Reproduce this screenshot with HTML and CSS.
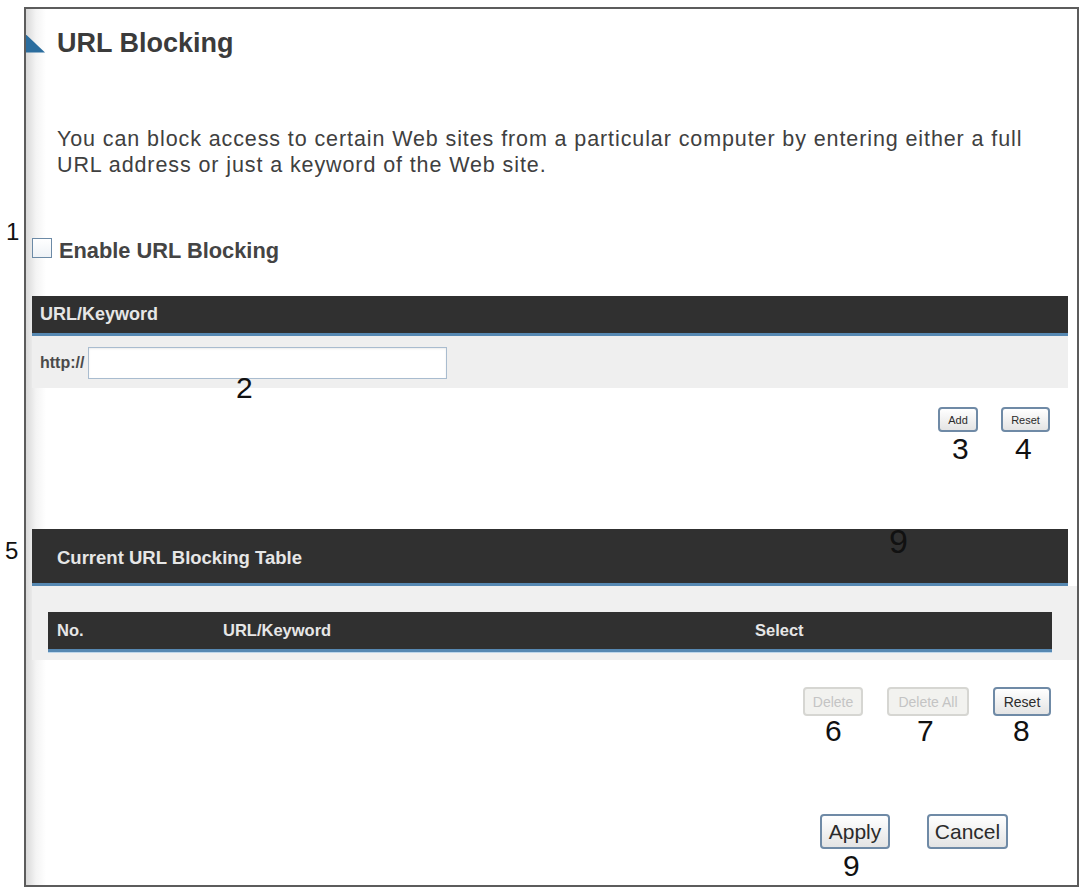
FILE: index.html
```html
<!DOCTYPE html>
<html lang="en">
<head>
    <meta charset="UTF-8">
    <title>URL Blocking</title>
    <link rel="stylesheet" href="styles.css">
</head>
<body>
    <div class="page">
        <div class="frame">
            <h1 class="title">URL Blocking</h1>
            <p class="intro">You can block access to certain Web sites from a particular computer by entering either a full<br>URL address or just a keyword of the Web site.</p>

            <label class="enable-row">
                <span class="checkbox"></span>
                <span class="enable-text">Enable URL Blocking</span>
            </label>

            <div class="bar bar-small">URL/Keyword</div>
            <div class="input-row">
                <span class="prefix">http://</span>
                <span class="url-input"></span>
            </div>
            <div class="btn-row btn-row-add">
                <button class="btn btn-xs btn-add">Add</button>
                <button class="btn btn-xs btn-reset1">Reset</button>
            </div>

            <div class="bar bar-large">Current URL Blocking Table</div>
            <div class="table-panel">
                <div class="table-head">
                    <span>No.</span>
                    <span>URL/Keyword</span>
                    <span>Select</span>
                </div>
            </div>
            <div class="btn-row btn-row-delete">
                <button class="btn btn-md disabled btn-delete">Delete</button>
                <button class="btn btn-md disabled btn-delete-all">Delete All</button>
                <button class="btn btn-md btn-reset2">Reset</button>
            </div>

            <div class="btn-row btn-row-apply">
                <button class="btn btn-lg btn-apply">Apply</button>
                <button class="btn btn-lg btn-cancel">Cancel</button>
            </div>
        </div>

        <!-- callout numbers -->
        <span class="note note-sm" style="left:6px; top:220px;">1</span>
        <span class="note" style="left:236px; top:373px;">2</span>
        <span class="note" style="left:952px; top:434px;">3</span>
        <span class="note" style="left:1015px; top:434px;">4</span>
        <span class="note note-sm" style="left:5px; top:539px;">5</span>
        <span class="note note-lg" style="left:889px; top:524px;">9</span>
        <span class="note" style="left:825px; top:716px;">6</span>
        <span class="note" style="left:917px; top:716px;">7</span>
        <span class="note" style="left:1013px; top:716px;">8</span>
        <span class="note" style="left:843px; top:851px;">9</span>
    </div>
</body>
</html>
```

FILE: styles.css
```css
body {
    margin: 0;
    background-color: #fff;
    font-family: "Liberation Sans", Arial, sans-serif;
}
.page {
    position: relative;
    padding: 7px 0 0 24px;
}
.frame {
    box-sizing: border-box;
    width: 1055px;
    height: 880px;
    border: 2px solid #5c5c5c;
    background: linear-gradient(to right, #d9d9d9 0, #f4f4f4 10px, #fff 20px);
    overflow: hidden;
}
.title {
    display: flex;
    align-items: center;
    gap: 12px;
    margin: 21px 0 0 0;
    font-size: 27px;
    line-height: 27px;
    font-weight: bold;
    color: #3b3b3b;
}
.title::before {
    content: "";
    width: 19px;
    height: 18px;
    background-color: #2b6d9e;
    clip-path: polygon(0 0, 0 100%, 100% 100%);
}
.intro {
    margin: 69px 0 0 31px;
    font-size: 21.5px;
    letter-spacing: 0.9px;
    line-height: 26px;
    color: #404040;
}
.enable-row {
    display: flex;
    align-items: flex-start;
    gap: 7px;
    margin: 60px 0 0 6px;
    height: 24px;
}
.checkbox {
    width: 18px;
    height: 18px;
    border: 1px solid #6c8aa6;
    background: linear-gradient(#fff, #eef2f6);
}
.enable-text {
    margin-top: 1px;
    font-size: 21.8px;
    line-height: 24px;
    font-weight: bold;
    color: #444;
}
.bar {
    display: flex;
    align-items: center;
    margin: 0 9px 0 6px;
    background-color: #303030;
    color: #e6e6e6;
    font-weight: bold;
    border-bottom: 3px solid #5688b2;
    box-shadow: 0 1px 0 #bcd5ea;
}
.bar-small {
    margin-top: 34px;
    height: 37px;
    padding-left: 8px;
    font-size: 18px;
}
.bar-large {
    margin-top: 97px;
    padding: 4px 0 0 25px;
    box-sizing: border-box;
    height: 57px;
    font-size: 18.5px;
}
.input-row {
    display: flex;
    align-items: center;
    gap: 4px;
    margin: 0 9px 0 6px;
    padding: 11px 8px 9px;
    background-color: #efefef;
}
.prefix {
    font-size: 16px;
    font-weight: bold;
    color: #4a4a4a;
}
.url-input {
    width: 357px;
    height: 30px;
    border: 1px solid #a9bccf;
    background-color: #fff;
    box-shadow: inset 0 1px 2px rgba(0,0,0,0.08);
}
.btn-row {
    display: flex;
    justify-content: flex-end;
}
.btn-row-add {
    margin-top: 19px;
    gap: 23px;
    padding-right: 27px;
}
.btn-row-delete {
    margin-top: 27px;
    gap: 24px;
    padding-right: 26px;
}
.btn-row-apply {
    margin-top: 98px;
    gap: 37px;
    padding-right: 69px;
}
.btn {
    font-family: "Liberation Sans", Arial, sans-serif;
    color: #2b2b2b;
    border: 2px solid #6f8aa6;
    border-radius: 4px;
    background: linear-gradient(#ffffff, #e4e4e4);
    padding: 0;
    cursor: pointer;
}
.btn-xs {
    height: 25px;
    font-size: 11px;
}
.btn-add { width: 40px; }
.btn-reset1 { width: 49px; }
.btn-md {
    height: 29px;
    font-size: 14px;
}
.btn-delete { width: 60px; }
.btn-delete-all { width: 82px; }
.btn-reset2 { width: 58px; }
.btn-lg {
    height: 35px;
    font-size: 21px;
}
.btn-apply { width: 70px; }
.btn-cancel { width: 81px; }
.btn.disabled {
    color: #c4c4c4;
    border-color: #d6d6d2;
    background: #f2f2ef;
}
.table-panel {
    margin-left: 6px;
    padding: 26px 25px 8px 16px;
    background-color: #f0f0f0;
}
.table-head {
    display: grid;
    grid-template-columns: 166px 532px 1fr;
    align-items: center;
    height: 37px;
    padding-left: 9px;
    background-color: #303030;
    color: #e6e6e6;
    font-size: 16.5px;
    font-weight: bold;
    border-bottom: 3px solid #5688b2;
    box-shadow: 0 1px 0 #bcd5ea;
}
.note {
    position: absolute;
    font-size: 30px;
    line-height: 1;
    color: #111;
}
.note-sm {
    font-size: 24px;
}
.note-lg {
    font-size: 34px;
}
```
